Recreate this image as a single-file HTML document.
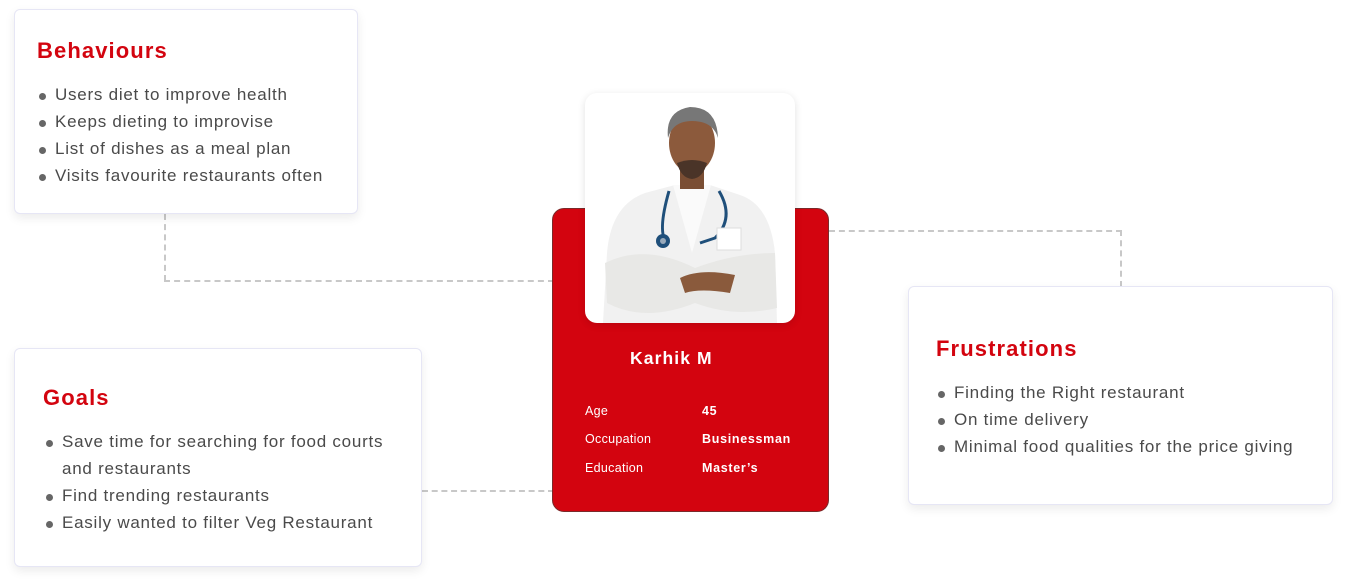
<!DOCTYPE html>
<html><head><meta charset="utf-8"><style>
*{margin:0;padding:0;box-sizing:border-box}
body{width:1347px;height:586px;background:#fff;position:relative;overflow:hidden;font-family:"Liberation Sans",Arial,sans-serif}
.card{position:absolute;background:#fff;border:1px solid #e6e6f5;border-radius:6px;box-shadow:0 4px 10px rgba(0,0,0,0.08)}
.t{position:absolute;color:#d3040f;font-weight:bold;font-size:22px;letter-spacing:1.1px}
ul{position:absolute;list-style:none;color:#4a4a4a;font-size:17px;line-height:27px;letter-spacing:0.75px}
li{position:relative;padding-left:16px}
li:before{content:"";position:absolute;left:0;top:12px;width:7px;height:7px;border-radius:50%;background:#666}
.d{position:absolute;border-color:#c8c8c8;border-style:dashed;border-width:0}
.red{position:absolute;left:552px;top:208px;width:277px;height:304px;background:#d3040f;border:1px solid #7a2a2a;border-radius:12px}
.photo{position:absolute;left:585px;top:93px;width:210px;height:230px;background:#fff;border-radius:12px;overflow:hidden;box-shadow:0 2px 8px rgba(0,0,0,0.12)}
.w{position:absolute;color:#fff;font-size:12.5px;letter-spacing:0.3px}
.b{font-weight:bold;letter-spacing:0.7px}
</style></head><body>
<div class="d" style="left:164px;top:214px;height:67px;border-left-width:2px"></div>
<div class="d" style="left:164px;top:280px;width:390px;border-top-width:2px"></div>
<div class="d" style="left:422px;top:490px;width:132px;border-top-width:2px"></div>
<div class="d" style="left:829px;top:230px;width:293px;border-top-width:2px"></div>
<div class="d" style="left:1120px;top:230px;height:57px;border-left-width:2px"></div>

<div class="card" style="left:14px;top:9px;width:344px;height:205px"></div>
<div class="t" style="left:37px;top:38px">Behaviours</div>
<ul style="left:39px;top:81px"><li>Users diet to improve health</li><li>Keeps dieting to improvise</li><li>List of dishes as a meal plan</li><li>Visits favourite restaurants often</li></ul>

<div class="card" style="left:14px;top:348px;width:408px;height:219px"></div>
<div class="t" style="left:43px;top:385px">Goals</div>
<ul style="left:46px;top:428px;width:355px"><li>Save time for searching for food courts and restaurants</li><li>Find trending restaurants</li><li>Easily wanted to filter Veg Restaurant</li></ul>

<div class="card" style="left:908px;top:286px;width:425px;height:219px"></div>
<div class="t" style="left:936px;top:336px">Frustrations</div>
<ul style="left:938px;top:379px"><li>Finding the Right restaurant</li><li>On time delivery</li><li>Minimal food qualities for the price giving</li></ul>

<div class="red"></div>
<div class="photo">
<svg width="210" height="230" viewBox="0 0 210 230">
<path d="M18 230 L22 160 Q26 112 60 100 L90 92 L125 92 L155 102 Q185 112 190 160 L192 230 Z" fill="#f1f1f1"/>
<path d="M88 92 L107 160 L126 92 Z" fill="#fafafa"/>
<path d="M20 170 Q60 150 110 175 Q150 160 190 160 L192 215 Q150 225 110 210 Q60 230 22 210 Z" fill="#e8e8e6"/>
<path d="M95 185 Q115 175 150 182 L145 200 Q115 195 100 200 Z" fill="#8a5a3c"/>
<rect x="95" y="72" width="24" height="24" fill="#7a4e34"/>
<ellipse cx="107" cy="50" rx="23" ry="30" fill="#8c5a3c"/>
<path d="M83 45 Q80 18 105 14 Q132 14 133 45 Q128 28 107 28 Q88 28 83 45Z" fill="#777"/>
<path d="M92 70 Q107 64 122 70 Q118 85 107 86 Q96 85 92 70Z" fill="#4a3428"/>
<path d="M84 98 Q72 140 82 150 M134 98 Q150 125 130 145 L115 150" stroke="#1f4f7a" stroke-width="3" fill="none"/>
<circle cx="78" cy="148" r="7" fill="#1f4f7a"/><circle cx="78" cy="148" r="3" fill="#9ab"/>
<rect x="132" y="135" width="24" height="22" fill="#fff" stroke="#ddd"/>
</svg>
</div>
<div class="w b" style="left:630px;top:348px;font-size:17.5px;letter-spacing:1.1px">Karhik M</div>
<div class="w" style="left:585px;top:404px">Age</div>
<div class="w" style="left:585px;top:432px">Occupation</div>
<div class="w" style="left:585px;top:461px">Education</div>
<div class="w b" style="left:702px;top:404px">45</div>
<div class="w b" style="left:702px;top:432px">Businessman</div>
<div class="w b" style="left:702px;top:461px">Master’s</div>
</body></html>
